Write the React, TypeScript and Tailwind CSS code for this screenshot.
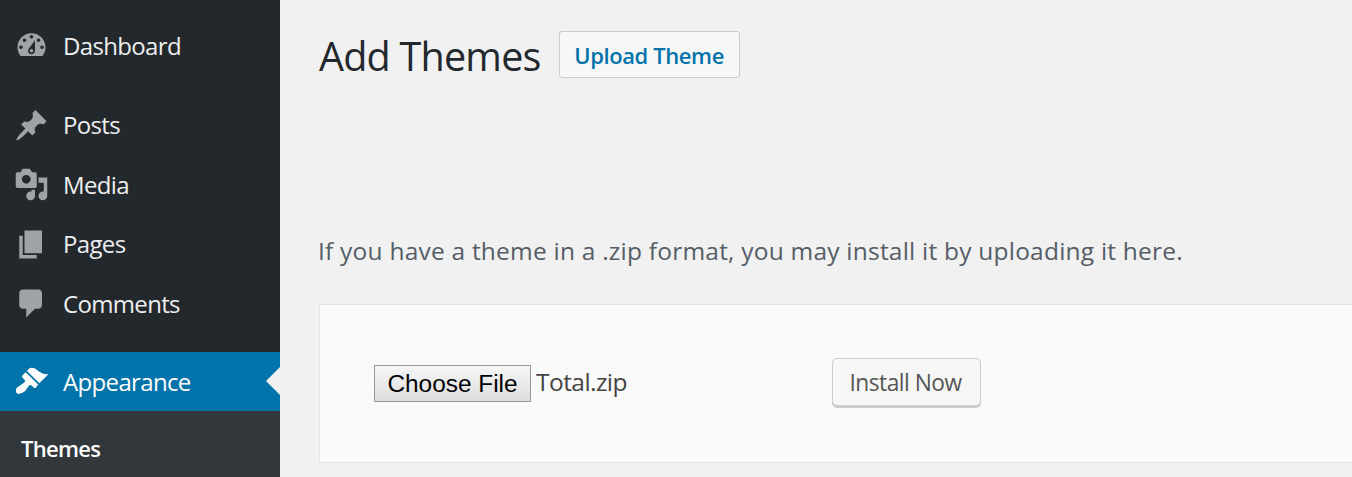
import React from 'react';

const SANS = 'font-["Open_Sans","Noto_Sans",sans-serif]';

const icons: Record<string, string> = {
  dashboard:
    'M3.76 16h12.48c1.1-1.37 1.76-3.11 1.76-5 0-4.42-3.58-8-8-8s-8 3.58-8 8c0 1.89.66 3.63 1.76 5zM10 4c.55 0 1 .45 1 1s-.45 1-1 1-1-.45-1-1 .45-1 1-1zM6 6c.55 0 1 .45 1 1s-.45 1-1 1-1-.45-1-1 .45-1 1-1zm8 0c.55 0 1 .45 1 1s-.45 1-1 1-1-.45-1-1 .45-1 1-1zm-5.37 5.55L12 7v6c0 1.1-.9 2-2 2s-2-.9-2-2c0-.57.24-1.08.63-1.45zM4 10c.55 0 1 .45 1 1s-.45 1-1 1-1-.45-1-1 .45-1 1-1zm12 0c.55 0 1 .45 1 1s-.45 1-1 1-1-.45-1-1 .45-1 1-1zm-5 3c0-.55-.45-1-1-1s-1 .45-1 1 .45 1 1 1 1-.45 1-1z',
  posts:
    'M10.44 3.02l1.82-1.82 6.36 6.35-1.83 1.82c-1.05-.68-2.48-.57-3.41.36l-.75.75c-.92.93-1.04 2.35-.35 3.41l-1.83 1.82-2.41-2.41-2.8 2.79c-.42.42-3.38 2.71-3.8 2.29s1.86-3.39 2.28-3.81l2.79-2.79L4.1 9.36l1.83-1.82c1.05.69 2.48.57 3.4-.36l.75-.75c.93-.92 1.05-2.35.36-3.41z',
  media:
    'M13 11V4c0-.55-.45-1-1-1h-1.67L9 1H5L3.67 3H2c-.55 0-1 .45-1 1v7c0 .55.45 1 1 1h10c.55 0 1-.45 1-1zM7 4.5c1.38 0 2.5 1.12 2.5 2.5S8.38 9.5 7 9.5 4.5 8.38 4.5 7 5.62 4.5 7 4.5zM14 6h5v10.5c0 1.38-1.12 2.5-2.5 2.5S14 17.88 14 16.5s1.12-2.5 2.5-2.5c.17 0 .34.02.5.05V9h-3V6zm-4 8.05V13h2v3.5c0 1.38-1.12 2.5-2.5 2.5S7 17.88 7 16.5 8.12 14 9.5 14c.17 0 .34.02.5.05z',
  pages: 'M6 15V2h10v13H6zm-1 1h8v2H3V5h2v11z',
  comments: 'M5 2h9c1.1 0 2 .9 2 2v7c0 1.1-.9 2-2 2h-2l-5 5v-5H5c-1.1 0-2-.9-2-2V4c0-1.1.9-2 2-2z',
  appearance:
    'M14.48 11.06L7.41 3.99l1.5-1.5c.5-.56 2.3-.47 3.51.32 1.21.8 1.43 1.28 2.91 2.1 1.18.64 2.45 1.26 4.45.85zm-.71.71L6.7 4.7 4.93 6.47c-.39.39-.39 1.02 0 1.41l1.06 1.06c.39.39.39 1.03 0 1.42-.6.6-1.43 1.11-2.21 1.69-.35.26-.7.53-1.01.84C1.43 13.23.5 15 1.5 16.5c1 1.2 3.27.07 4.67-.93.31-.31.58-.66.84-1.01.58-.78 1.09-1.61 1.69-2.21.39-.39 1.03-.39 1.42 0l1.06 1.06c.39.39 1.02.39 1.41 0z',
};

const MenuItem = ({ icon, label, active, low }: { icon: string; label: string; active?: boolean; low?: boolean }) => (
  <div className={`relative flex h-[59.5px] items-center ${active ? 'bg-[#0073aa]' : ''}`}>
    <svg viewBox="0 0 20 20" className={`ml-[14px] size-[35px] shrink-0 ${active ? 'fill-white' : 'fill-[#9ea3a8]'}`}>
      <path fillRule="evenodd" d={icons[icon]} />
    </svg>
    <span className={`ml-[14px] text-[24px] tracking-[-0.66px] ${low ? 'pt-[1px]' : ''} ${active ? 'text-white' : 'text-[#eeeeee]'}`}>
      {label}
    </span>
    {active && (
      <div className="absolute right-0 top-1/2 h-0 w-0 -translate-y-1/2 border-y-[14px] border-r-[14px] border-y-transparent border-r-[#f1f1f1]" />
    )}
  </div>
);

export default function App() {
  return (
    <div className={`flex h-[477px] w-[1352px] overflow-hidden bg-[#f1f1f1] ${SANS}`}>
      <aside className="h-full w-[280px] shrink-0 bg-[#23282d] pt-4">
        <MenuItem icon="dashboard" label="Dashboard" low />
        <div className="h-[19.75px]" />
        <MenuItem icon="posts" label="Posts" />
        <MenuItem icon="media" label="Media" />
        <MenuItem icon="pages" label="Pages" />
        <MenuItem icon="comments" label="Comments" />
        <div className="h-[18.25px]" />
        <MenuItem icon="appearance" label="Appearance" active low />
        <div className="h-full bg-[#32373c] pl-[21px] pt-[21px]">
          <span className="text-[22px] font-semibold tracking-[-0.7px] text-white">Themes</span>
        </div>
      </aside>

      <main className="min-w-0 flex-1 pl-[38px] pt-[31px]">
        <div className="flex h-[47px] items-center">
          <h1 className="ml-[1px] pt-[3px] text-[39.5px] leading-[45px] tracking-[-0.77px] text-[#23282d]">Add Themes</h1>
          <button className="ml-[18px] flex h-[47px] w-[181px] items-center justify-center rounded-[3px] border border-[#cccccc] bg-[#f7f7f7] pt-[1px] text-[22px] font-semibold tracking-[-0.4px] text-[#0073aa]">
            Upload Theme
          </button>
        </div>

        <p className="mt-[155px] text-[24.5px] leading-[36px] tracking-[0.22px] text-[#555d66]">
          If you have a theme in a .zip format, you may install it by uploading it here.
        </p>

        <div className="-mr-2 mt-[35px] ml-[1px] flex h-[159px] items-center border border-[#e5e5e5] bg-[#fafafa] pl-[54px]">
          <button className="h-[37px] w-[157px] border border-[#999999] bg-gradient-to-b from-[#f6f6f6] to-[#dedede] font-['Liberation_Sans',sans-serif] text-[24.4px] text-black">
            Choose File
          </button>
          <span className="mb-[2px] ml-[5px] w-[296px] text-[24.5px] tracking-[-0.55px] text-[#444444]">Total.zip</span>
          <button className="mb-[3px] h-[48px] w-[149px] rounded-[5px] border border-[#cccccc] bg-[#f7f7f7] pr-[2px] pt-[2px] text-[22.75px] tracking-[-0.5px] text-[#555555] shadow-[0_2px_0_#cccccc]">
            Install Now
          </button>
        </div>
      </main>
    </div>
  );
}
